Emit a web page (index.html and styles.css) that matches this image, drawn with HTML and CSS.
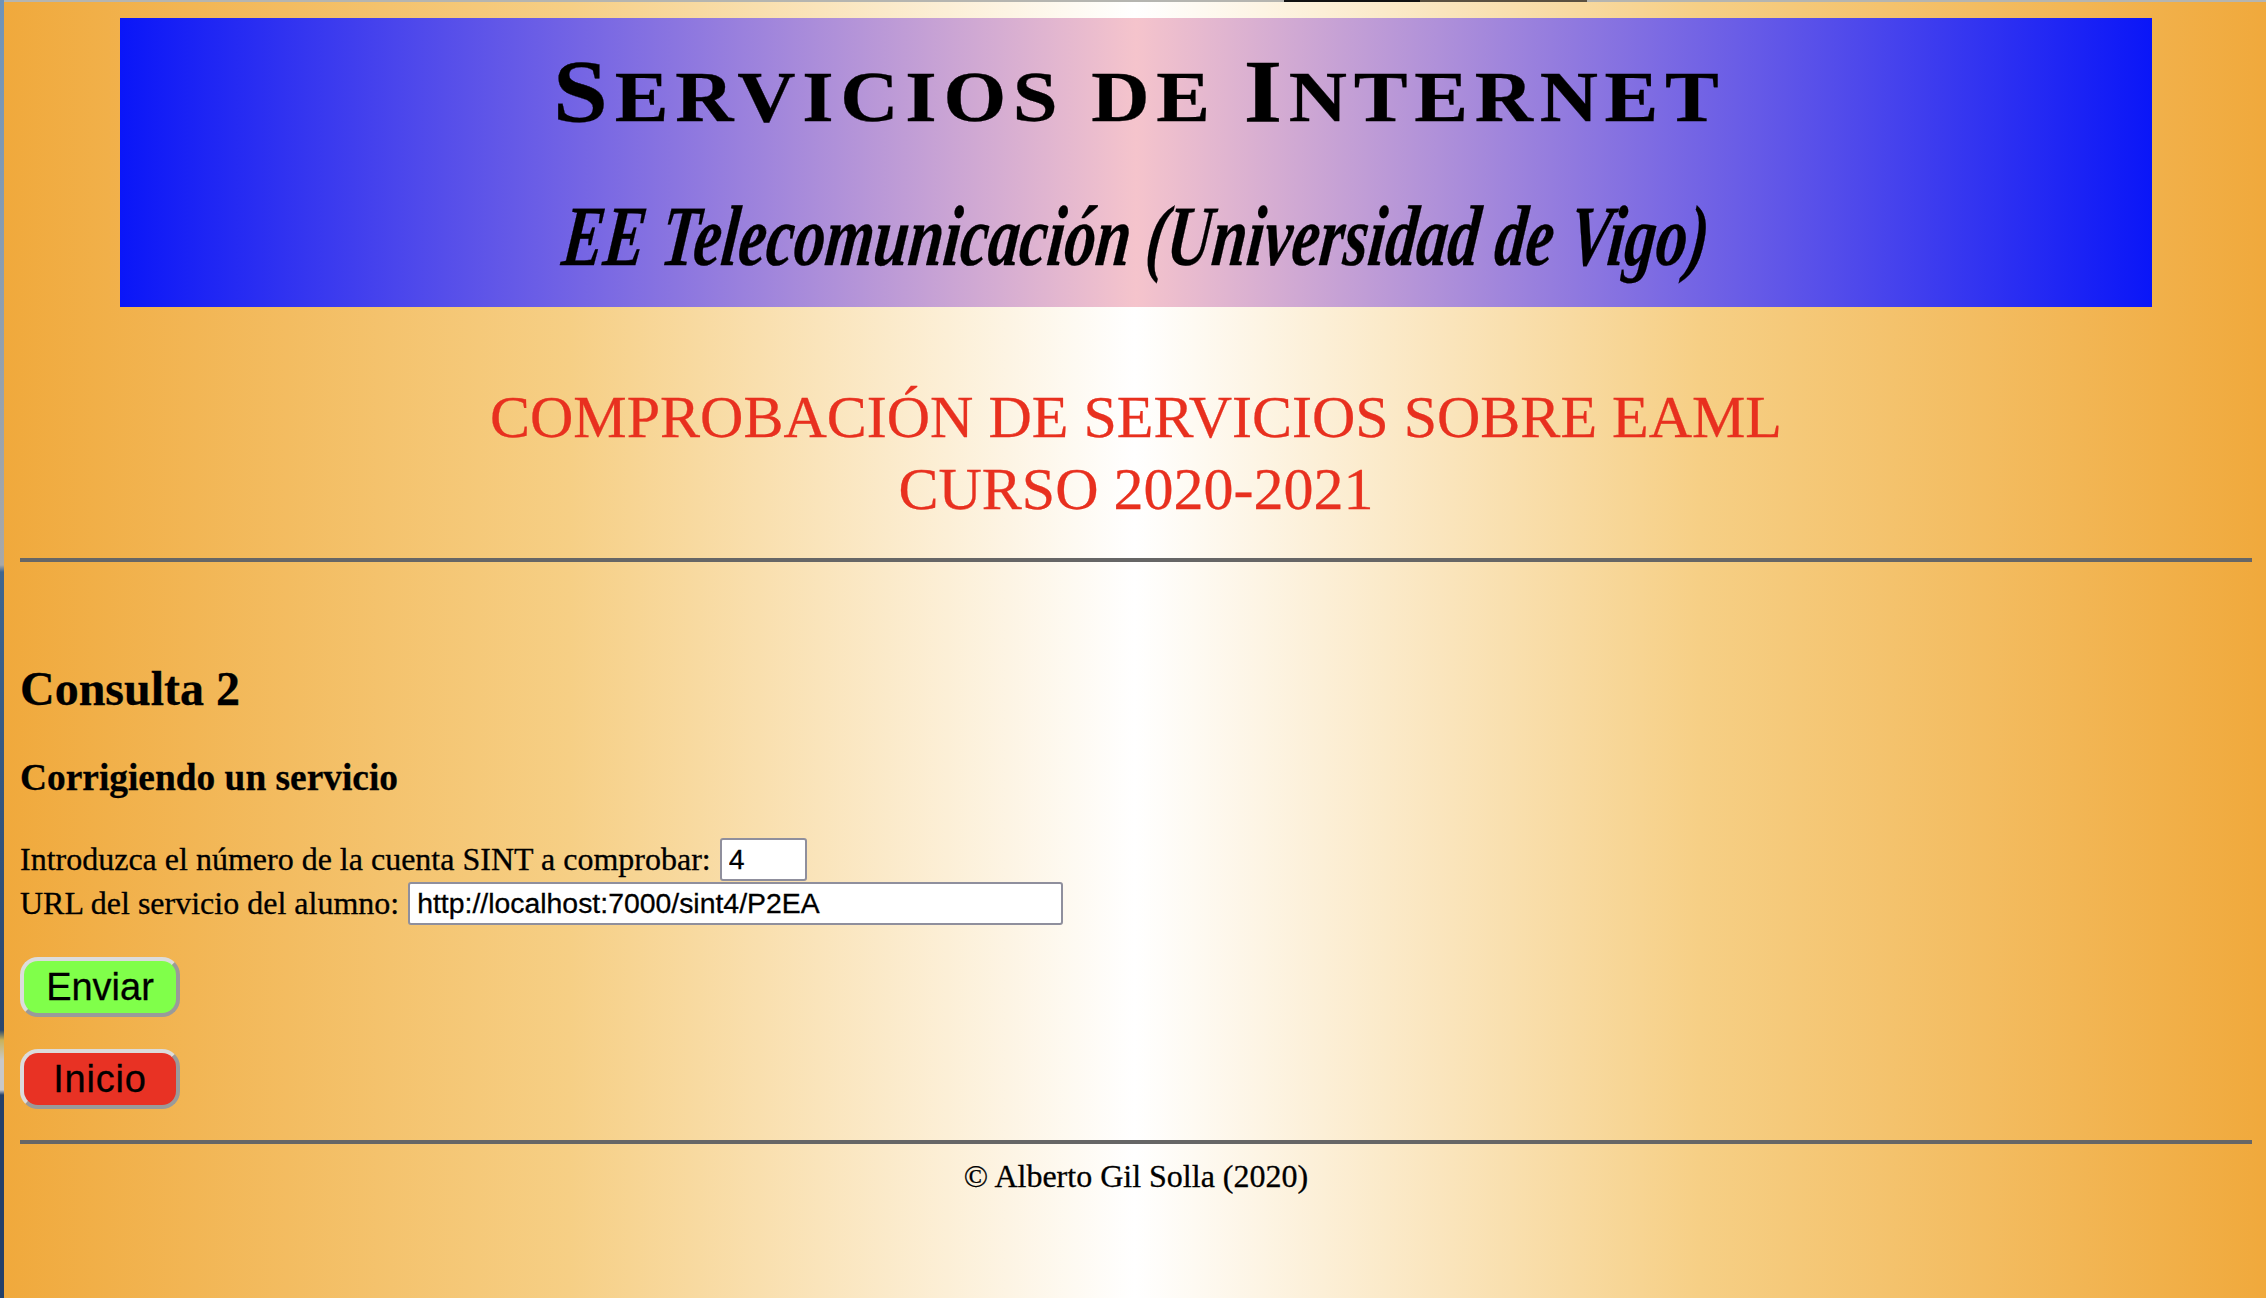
FILE: index.html
```html
<!DOCTYPE html>
<html lang="es">
<head>
<meta charset="utf-8">
<title>Servicios de Internet</title>
<link rel="stylesheet" href="styles.css">
</head>
<body>
<div class="window">
  <div class="top-strip"></div>
  <div class="page">
    <header class="banner">
      <div class="banner-title"><span class="cap">S</span>ervicios de <span class="cap">I</span>nternet</div>
      <div class="banner-sub"><span class="script">EE Telecomunicación (Universidad de Vigo)</span></div>
    </header>
    <div class="titles">
      <div>COMPROBACIÓN DE SERVICIOS SOBRE EAML</div>
      <div>CURSO 2020-2021</div>
    </div>
    <hr class="rule">
    <h2 class="query">Consulta 2</h2>
    <h3 class="step">Corrigiendo un servicio</h3>
    <form class="form">
      <div class="field"><span>Introduzca el número de la cuenta SINT a comprobar:</span><input class="input input-short" type="text" value="4"></div>
      <div class="field"><span>URL del servicio del alumno:</span><input class="input input-long" type="text" value="http://localhost:7000/sint4/P2EA"></div>
      <button class="btn btn-send" type="button">Enviar</button>
      <button class="btn btn-home" type="button">Inicio</button>
    </form>
    <hr class="rule rule-foot">
    <footer class="foot">© Alberto Gil Solla (2020)</footer>
  </div>
</div>
</body>
</html>
```
FILE: styles.css
```css
html, body { margin: 0; height: 100%; }
body {
  overflow: hidden;
  background: linear-gradient(to bottom, #6f93b8 0, #a8a8a8 565px, #3f6690 572px, #2a466e 1030px, #c9b25a 1040px, #c8c8c8 1060px, #c8c8c8 1090px, #24406a 1095px, #24406a 100%);
  font-family: "Liberation Serif", serif;
  font-size: 32px;
  color: #000;
}
.window {
  height: 1298px;
  margin-left: 4px;
  background: linear-gradient(to right, #f0a93c 0%, #f6cf85 25%, #ffffff 50%, #f6cf85 75%, #f0a93c 100%);
}
.top-strip {
  height: 2px;
  background: linear-gradient(to right, #b5b5b0 0 1280px, #111 1280px 1416px, #5a5040 1416px 1583px, #b5b5b0 1583px);
}
.page { padding: 16px 14px 0 16px; -webkit-text-stroke: 0.3px; }
.banner {
  box-sizing: border-box;
  width: 2032px;
  height: 289px;
  margin-left: 100px;
  padding-top: 24px;
  text-align: center;
  overflow: hidden;
  background: linear-gradient(to right, #0a16f8 0%, #f5c4cc 50%, #0a16f8 100%);
}
.banner-title {
  font-family: "Liberation Serif", serif;
  font-weight: 700;
  font-size: 72px;
  text-transform: uppercase;
  letter-spacing: 6px;
  text-indent: 6px;
  line-height: 100px;
  transform: scaleX(1.12);
}
.cap { font-size: 88px; }
.banner-sub {
  margin-top: 44px;
  font-style: italic;
  font-weight: 700;
  font-size: 86px;
  line-height: 90px;
}
.script {
  display: inline-block;
  white-space: nowrap;
  transform: skewX(-6deg) scaleX(0.726);
}
.titles {
  margin-top: 74px;
  text-align: center;
  font-size: 60px;
  line-height: 72px;
  color: #e8301f;
}
.rule {
  margin: 33px 0 0;
  height: 4px;
  border: 0;
  background: #666;
}
.query { margin: 99px 0 0; font-size: 48px; line-height: 56px; }
.step { margin: 39px 0 0; font-size: 37.4px; line-height: 44px; }
.form { margin-top: 37px; }
.field {
  display: flex;
  align-items: center;
  gap: 9px;
  height: 44px;
}
.input {
  box-sizing: border-box;
  height: 43px;
  padding: 2px 7px;
  border: 2px solid #8f8f9d;
  border-radius: 3px;
  background: #fff;
  font-family: "Liberation Sans", sans-serif;
  font-size: 28.4px;
}
.input-short { width: 87px; }
.input-long { width: 655px; }
.btn {
  display: block;
  box-sizing: border-box;
  width: 160px;
  height: 60px;
  border: 4px solid;
  border-color: #dcdcdc #9a9a9a #9a9a9a #dcdcdc;
  border-radius: 18px;
  font-family: "Liberation Sans", sans-serif;
  font-size: 38px;
  color: #000;
}
.btn-send { margin-top: 32px; background: #80ff4a; }
.btn-home { margin-top: 32px; background: #e83224; letter-spacing: 0.8px; }
.rule-foot { margin-top: 31px; }
.foot { margin-top: 12px; text-align: center; line-height: 40px; }
```
